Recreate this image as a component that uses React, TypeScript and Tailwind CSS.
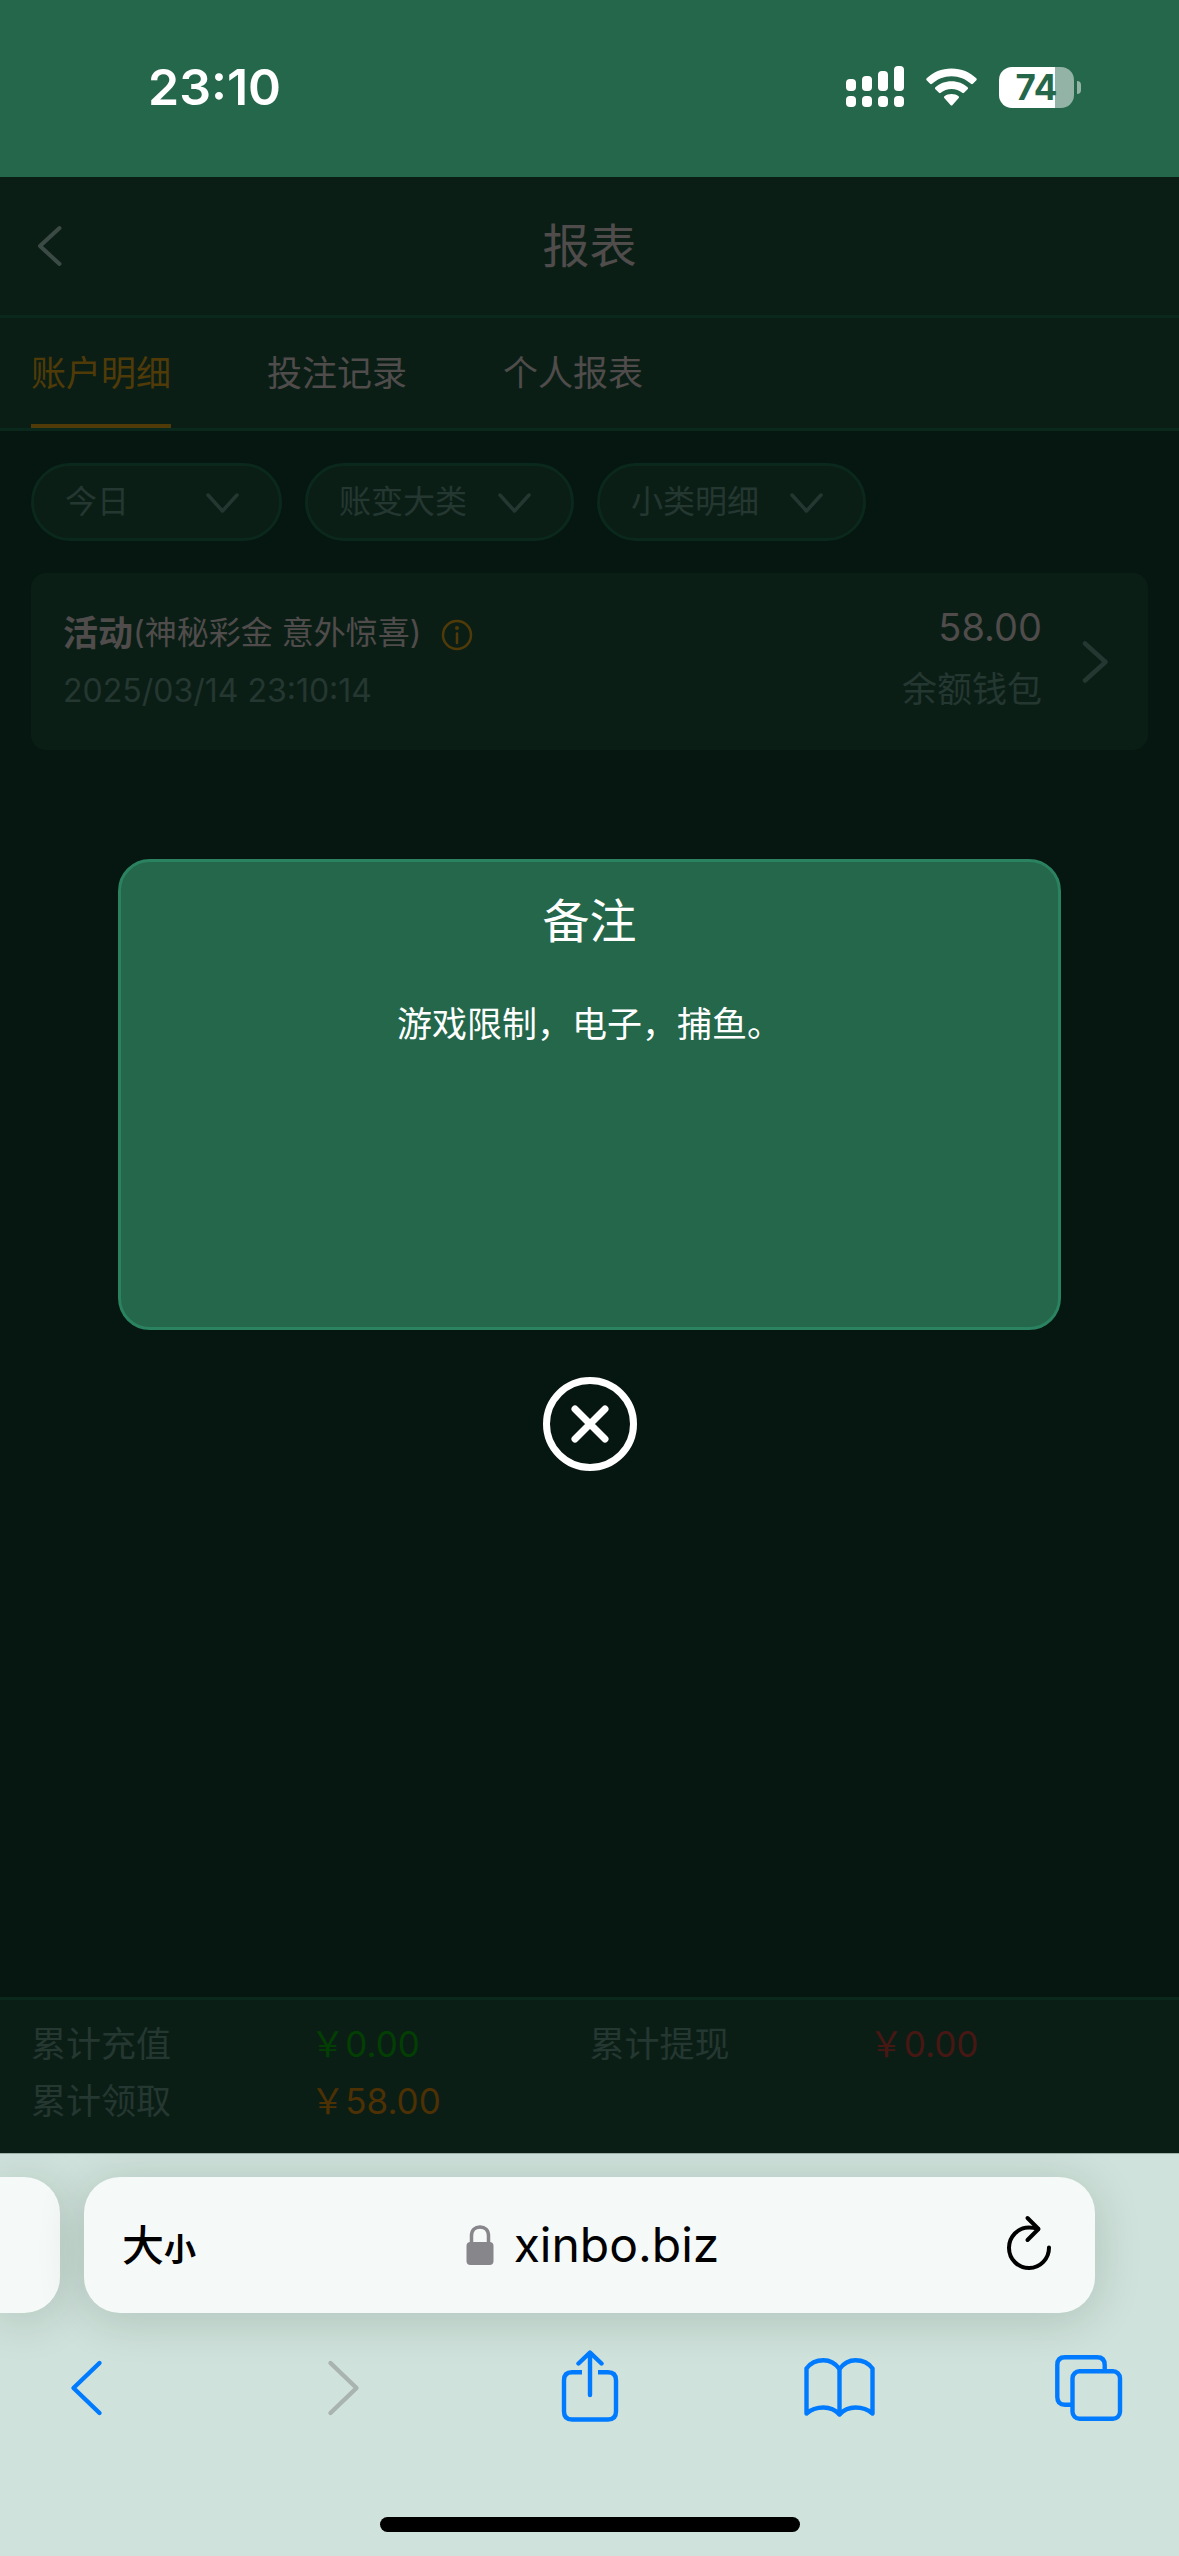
import { useState } from "react";
import type { ReactNode } from "react";

const TABS = ["账户明细", "投注记录", "个人报表"];

const FILTERS = [
  { label: "日期", value: "今日", width: "w-[251px]" },
  { label: "账变大类", value: "账变大类", width: "w-[269px]" },
  { label: "小类明细", value: "小类明细", width: "w-[269px]" },
];

const TOTALS = [
  { label: "累计充值", value: "￥0.00", color: "text-[#033f03]" },
  { label: "累计提现", value: "￥0.00", color: "text-[#471713]" },
  { label: "累计领取", value: "￥58.00", color: "text-[#4d3003]" },
];

function StatusBar() {
  return (
    <div className="flex h-[177px] shrink-0 items-center justify-between bg-[#24674b] pb-[3px] pl-[148px] pr-[98px] text-white">
      <span className="text-[50px] font-semibold leading-[60px]">23:10</span>
      <div className="flex items-center gap-[22px]">
        <svg width="58" height="42" viewBox="0 0 58 42" fill="currentColor">
          <rect x="0" y="13" width="10" height="12" rx="4" />
          <rect x="16" y="10" width="10" height="15" rx="4" />
          <rect x="32" y="5" width="10" height="20" rx="4" />
          <rect x="48" y="0" width="10" height="25" rx="4" />
          <rect x="0" y="30" width="10" height="11" rx="4" />
          <rect x="16" y="30" width="10" height="11" rx="4" />
          <rect x="32" y="30" width="10" height="11" rx="4" />
          <rect x="48" y="30" width="10" height="11" rx="4" />
        </svg>
        <svg width="51" height="38" viewBox="0 0 51 38" fill="currentColor">
          <path d="M25.500 0.500C35.500 0.500 44 4.200 50.300 10.300C50.900 10.900 50.900 11.600 50.400 12.200L46.900 15.800C46.300 16.400 45.600 16.300 45 15.800C39.800 11 33 8.200 25.500 8.200C18 8.200 11.200 11 6 15.800C5.400 16.300 4.700 16.400 4.100 15.800L0.600 12.200C0.100 11.600 0.100 10.900 0.700 10.300C7 4.200 15.500 0.500 25.500 0.500Z" />
          <path d="M25.500 13.300C31.900 13.300 37.400 15.600 41.600 19.300C42.200 19.900 42.200 20.600 41.600 21.200L38 24.800C37.400 25.400 36.800 25.300 36.200 24.800C33.300 22.300 29.700 20.900 25.500 20.900C21.300 20.900 17.700 22.300 14.800 24.800C14.200 25.300 13.600 25.400 13 24.800L9.400 21.200C8.800 20.600 8.800 19.900 9.400 19.300C13.600 15.600 19.100 13.300 25.500 13.300Z" />
          <path d="M25.500 26C28.300 26 30.700 26.900 32.600 28.300C33.200 28.800 33.200 29.500 32.700 30L26.500 36.900C25.900 37.600 25.100 37.600 24.500 36.900L18.300 30C17.800 29.500 17.800 28.800 18.400 28.300C20.300 26.900 22.700 26 25.500 26Z" />
        </svg>
        <div className="flex items-center gap-[3px]">
          <div className="flex h-[41px] w-[75px] items-center justify-center rounded-[13px] bg-linear-to-r from-white from-75% to-[#92b3a5] to-75% text-[35px] font-bold leading-[41px] text-[#24674b]">
            74
          </div>
          <div className="h-[13px] w-[4px] rounded-r-full bg-[#92b3a5]" />
        </div>
      </div>
    </div>
  );
}

function Chevron({ className }: { className: string }) {
  return (
    <svg
      className={className}
      width="33"
      height="20"
      viewBox="0 0 33 20"
      fill="none"
      stroke="currentColor"
      strokeWidth="3.500"
      strokeLinecap="round"
      strokeLinejoin="round"
    >
      <path d="M2 2L16.500 18L31 2" />
    </svg>
  );
}

function Filters() {
  return (
    <div className="flex gap-[23px] px-[31px] pt-[32px]">
      {FILTERS.map((f) => (
        <div key={f.label} className={`relative ${f.width}`}>
          <select
            aria-label={f.label}
            className="h-[78px] w-full appearance-none rounded-full border-3 border-[#0b281d] bg-[#0b1e16] pl-[31px] text-[32px] leading-[48px] text-[#253731]"
          >
            <option>{f.value}</option>
          </select>
          <Chevron className="pointer-events-none absolute right-[43px] top-[30px] text-[#253731]" />
        </div>
      ))}
    </div>
  );
}

function RecordCard() {
  return (
    <div className="mx-[31px] mt-[32px] flex h-[177px] items-center rounded-[15px] bg-[#0b1e16] pl-[32px] pr-[38px]">
      <div className="flex-1">
        <div className="flex items-center leading-[58px] text-[#4f4c4b]">
          <strong className="text-[35px] font-bold">活动</strong>
          <span className="text-[32px]">(神秘彩金 意外惊喜)</span>
          <button aria-label="备注" className="ml-[20px] pt-[4px] text-[#503b08]">
            <svg width="32" height="32" viewBox="0 0 32 32" fill="none" stroke="currentColor" strokeWidth="2.500">
              <circle cx="16" cy="16" r="14" />
              <path d="M16 14.500V24" strokeLinecap="round" />
              <circle cx="16" cy="9" r="2" fill="currentColor" stroke="none" />
            </svg>
          </button>
        </div>
        <div className="text-[32px] leading-[58px] text-[#253731]">2025/03/14 23:10:14</div>
      </div>
      <div className="pb-[8px] text-right">
        <div className="text-[38px] leading-[62px] text-[#4f4c4b]">58.00</div>
        <div className="text-[35px] leading-[62px] text-[#253731]">余额钱包</div>
      </div>
      <button aria-label="详情" className="ml-[40px] text-[#253731]">
        <svg width="28" height="44" viewBox="0 0 28 44" fill="none" stroke="currentColor" strokeWidth="4.500" strokeLinecap="round" strokeLinejoin="round">
          <path d="M3 3.500L23.500 22L3 40.500" />
        </svg>
      </button>
    </div>
  );
}

function RemarkDialog({ onClose }: { onClose: () => void }) {
  return (
    <div className="absolute inset-0 flex flex-col items-center justify-center">
      <div
        role="dialog"
        aria-labelledby="remark-title"
        className="h-[471px] w-4/5 rounded-[32px] border-3 border-[#2b8260] bg-[#24674b] px-8 pt-[27px] text-center text-white"
      >
        <h2 id="remark-title" className="text-[47px] leading-[64px]">
          备注
        </h2>
        <p className="mt-[42px] text-[35px] leading-[58px]">游戏限制，电子，捕鱼。</p>
      </div>
      <button aria-label="关闭" onClick={onClose} className="mt-[47px] text-white">
        <svg width="94" height="94" viewBox="0 0 94 94" fill="none" stroke="currentColor">
          <circle cx="47" cy="47" r="43.500" strokeWidth="7" />
          <path d="M32 32L62 62M62 32L32 62" strokeWidth="7" strokeLinecap="round" />
        </svg>
      </button>
    </div>
  );
}

function ToolbarButton({ label, muted, children }: { label: string; muted?: boolean; children: ReactNode }) {
  return (
    <button aria-label={label} disabled={muted} className={muted ? "text-[#a9b3af]" : "text-[#007aff]"}>
      <svg
        width="76"
        height="76"
        viewBox="0 0 76 76"
        fill="none"
        stroke="currentColor"
        strokeWidth="4.400"
        strokeLinecap="round"
        strokeLinejoin="round"
      >
        {children}
      </svg>
    </button>
  );
}

function BrowserBar() {
  return (
    <footer className="shrink-0 overflow-hidden border-t border-[#9fb0a9] bg-[#cfe2db] pb-[24px] pt-[23px]">
      <div className="flex h-[136px] gap-[24px]">
        <div className="w-[60px] rounded-r-[36px] bg-[#f5f9f8] shadow-[0_6px_48px_rgba(0,30,15,0.16)]" />
        <div className="mr-[84px] flex flex-1 items-center justify-between rounded-[36px] bg-[#f5f9f8] pl-[38px] pr-[42px] text-black shadow-[0_6px_48px_rgba(0,30,15,0.16)]">
          <button aria-label="页面设置" className="flex w-[100px] items-baseline">
            <span className="text-[42px] font-medium">大</span>
            <span className="text-[32px] font-bold">小</span>
          </button>
          <button className="flex items-center gap-[20px] text-[48px] leading-[60px]">
            <svg width="28" height="40" viewBox="0 0 28 40" fill="none">
              <path d="M5.500 18V11C5.500 5 9 2 14 2S22.500 5 22.500 11V18" stroke="#86868b" strokeWidth="3.500" />
              <rect x="0.500" y="17" width="27" height="23" rx="4" fill="#86868b" />
            </svg>
            xinbo.biz
          </button>
          <button aria-label="重新载入" className="flex w-[90px] justify-end">
            <svg width="48" height="60" viewBox="0 0 48 60" fill="none" stroke="currentColor" strokeWidth="4" strokeLinecap="round" strokeLinejoin="round">
              <path d="M44 32.500A20 20.300 0 1 1 24 12.500C27.500 12.500 30 13 33 14" />
              <path d="M22.500 3L33.500 14L22.500 25" />
            </svg>
          </button>
        </div>
      </div>
      <nav className="flex justify-between px-[51px] pt-[37px]">
        <ToolbarButton label="后退">
          <path d="M48.500 13L22.500 38L48.500 63" />
        </ToolbarButton>
        <ToolbarButton label="前进" muted>
          <path d="M29.500 13L55.500 38L29.500 63" />
        </ToolbarButton>
        <ToolbarButton label="共享">
          <path d="M38 45V3M26.500 13.500L38 2.500L49.500 13.500" />
          <path
            d="M30 22.300H20Q12 22.300 12 30.300V61.500Q12 69.500 20 69.500H56Q64 69.500 64 61.500V30.300Q64 22.300 56 22.300H46"
            strokeLinecap="butt"
          />
        </ToolbarButton>
        <ToolbarButton label="书签">
          <path d="M37.500 19C33.500 13.500 28 10.300 21.500 10.300C14.500 10.300 8.500 13 4.500 18.500V63.500C9 59.500 14.500 57.500 21.500 57.500C28 57.500 33.500 60 37.500 64.500C41.500 60 47 57.500 53.500 57.500C60.500 57.500 66 59.500 70.500 63.500V18.500C66.500 13 60.500 10.300 53.500 10.300C47 10.300 41.500 13.500 37.500 19Z" />
          <path d="M37.500 19V64" />
        </ToolbarButton>
        <ToolbarButton label="标签页">
          <path d="M20 54.700H13Q5.300 54.700 5.300 47V15Q5.300 7.300 13 7.300H45Q52.700 7.300 52.700 15V21" strokeLinecap="butt" />
          <rect x="20.500" y="21.300" width="47.500" height="47.500" rx="7" />
        </ToolbarButton>
      </nav>
      <div className="mx-auto mt-[91px] h-[15px] w-[420px] rounded-full bg-black" />
    </footer>
  );
}

export default function App() {
  const [tab, setTab] = useState(TABS[0]);
  const [open, setOpen] = useState(true);

  return (
    <div className="flex min-h-screen flex-col bg-[#061610] font-[Inter,'Noto_Sans_CJK_SC',sans-serif]">
      <StatusBar />
      <main className="relative flex flex-1 flex-col">
        <header className="grid h-[141px] grid-cols-3 items-center border-b-3 border-[#0b281d] bg-[#0b1e16] px-[36px]">
          <button aria-label="返回" className="justify-self-start text-[#3c4a45]">
            <svg width="28" height="42" viewBox="0 0 28 42" fill="none" stroke="currentColor" strokeWidth="4" strokeLinecap="round" strokeLinejoin="round">
              <path d="M23.500 3L4 21L23.500 39" />
            </svg>
          </button>
          <h1 className="text-center text-[47px] leading-[64px] text-[#4f4c4b]">报表</h1>
        </header>
        <nav className="flex h-[113px] gap-[96px] border-b-3 border-[#0b281d] bg-[#0b1e16] px-[31px]">
          {TABS.map((t) => (
            <button
              key={t}
              onClick={() => setTab(t)}
              className={`border-b-4 pt-[4px] text-[35px] ${
                t === tab ? "border-[#503b08] text-[#503b08]" : "border-transparent text-[#4f4c4b]"
              }`}
            >
              {t}
            </button>
          ))}
        </nav>
        <Filters />
        <RecordCard />
        <dl className="mt-auto grid h-[156px] grid-cols-4 content-start border-t-3 border-[#0b281d] bg-[#0b1e16] px-[31px] pt-[16px] text-[35px] leading-[57px]">
          {TOTALS.map((t) => (
            <div key={t.label} className="col-span-2 grid grid-cols-2">
              <dt className="text-[#253731]">{t.label}</dt>
              <dd className={t.color}>{t.value}</dd>
            </div>
          ))}
        </dl>
        {open && <RemarkDialog onClose={() => setOpen(false)} />}
      </main>
      <BrowserBar />
    </div>
  );
}
